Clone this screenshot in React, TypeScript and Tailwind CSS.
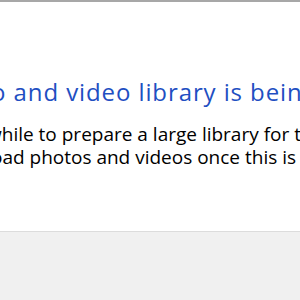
export default function App() {
  return (
    <div className="w-[300px] h-[300px] overflow-hidden bg-white flex flex-col" style={{ fontFamily: '"Open Sans", "Noto Sans", sans-serif' }}>
      <div className="h-[2px] bg-[#a7a7a7] shrink-0" />
      <div className="h-[229px] shrink-0 flex flex-col pt-[75px]">
        <div className="whitespace-nowrap ml-[-128px] text-[24px] leading-[30px] tracking-[0.9px] text-[#1f4fc2]">
          Your photo and video library is being prepared
        </div>
        <div className="mt-[16px] flex flex-col text-[19px] leading-[23px] text-black">
          <div className="whitespace-nowrap ml-[-131px]">It may take a while to prepare a large library for the first time.</div>
          <div className="whitespace-nowrap ml-[-112px]">You can upload photos and videos once this is done.</div>
        </div>
      </div>
      <div className="flex-1 bg-[#f0f0f0] border-t border-[#dcdcdc]" />
    </div>
  );
}
